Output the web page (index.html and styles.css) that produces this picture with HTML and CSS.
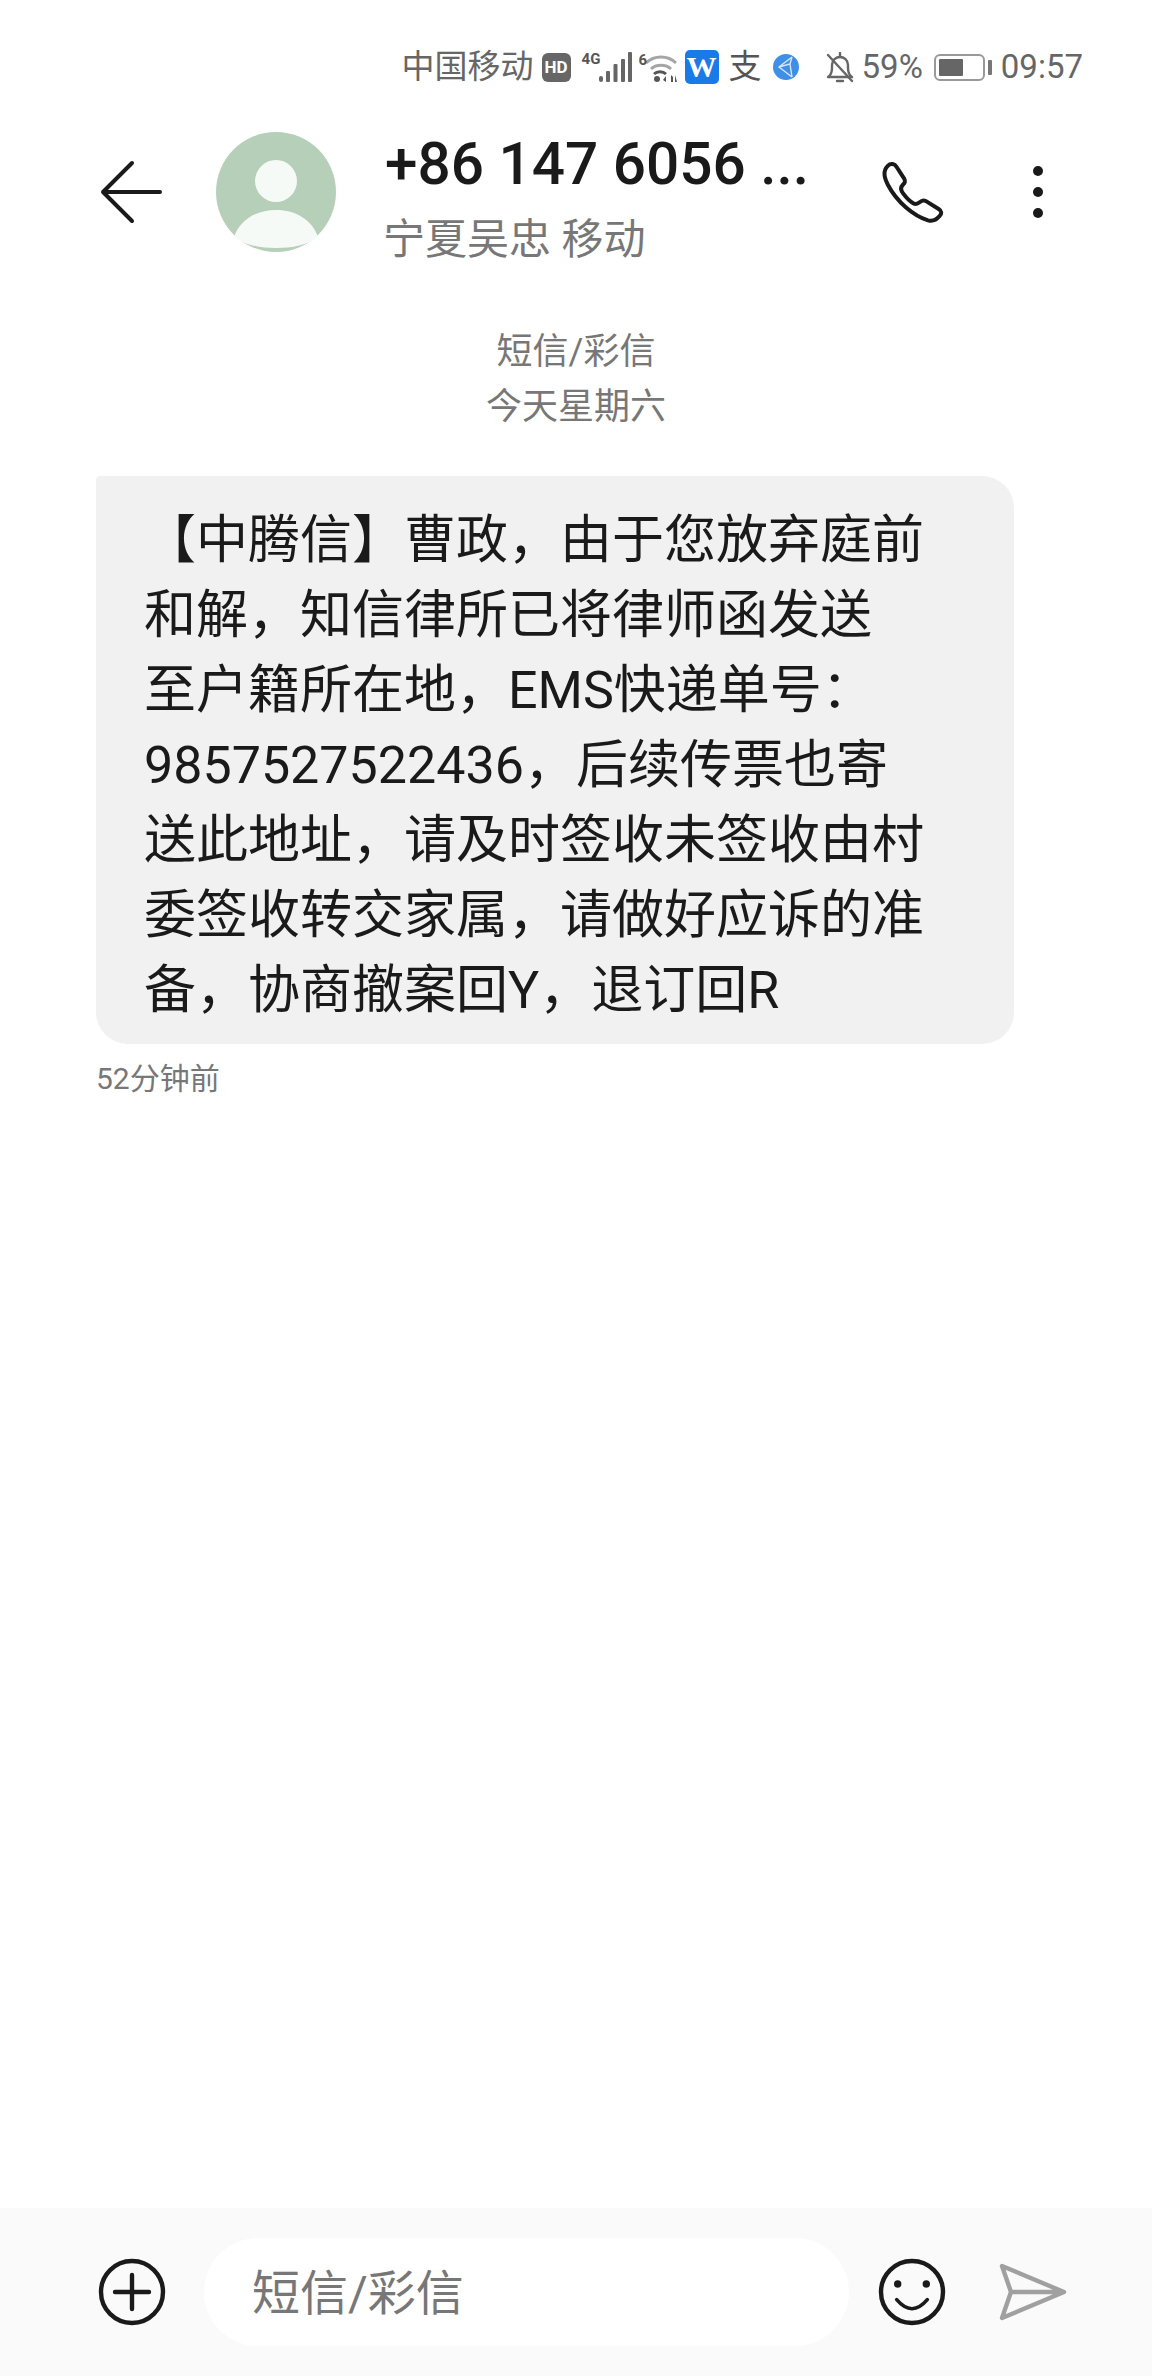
FILE: index.html
```html
<!DOCTYPE html>
<html lang="zh-CN">
<head>
    <meta charset="UTF-8">
    <meta name="viewport" content="width=device-width, initial-scale=1.0">
    <title>短信/彩信</title>
    <link rel="stylesheet" href="styles.css">
</head>
<body>
    <div class="phone">
        <div class="status-bar">
            <span class="carrier">中国移动</span>
            <span class="hd-badge">HD</span>
            <div class="signal">
                <span class="net-label">4G</span>
                <svg width="33" height="30" viewBox="0 0 33 30">
                    <g fill="#666">
                        <rect x="0" y="24" width="4" height="6" rx="2"/>
                        <rect x="7" y="19" width="4" height="11" rx="1"/>
                        <rect x="14.5" y="12" width="4" height="18" rx="1"/>
                        <rect x="22" y="7" width="4" height="23" rx="1"/>
                        <rect x="29" y="0" width="4" height="30" rx="1"/>
                    </g>
                </svg>
            </div>
            <div class="wifi">
                <span class="net-label">6</span>
                <svg width="32" height="28" viewBox="0 0 32 28">
                    <g fill="none" stroke="#a5a5a5" stroke-width="2.8">
                        <path d="M1 9C9 1 23 1 31 9"/>
                        <path d="M6 15C11 10 21 10 26 15"/>
                    </g>
                    <path d="M9 20C12 17 18 17 21 20" fill="none" stroke="#555" stroke-width="2.8"/>
                    <circle cx="12" cy="25" r="3" fill="#555"/>
                    <path d="M21 28v-6l-3 4zM26 21v7h2v-5zM30 21v7h2z" fill="#555"/>
                </svg>
            </div>
            <span class="app-badge">W</span>
            <span class="pay-icon">支</span>
            <svg class="globe" width="26" height="26" viewBox="0 0 26 26">
                <circle cx="13" cy="13" r="13" fill="#3f8fe6"/>
                <path d="M19 3 6 13l13 10M6 13l11-3 2-7M17 10l2 13" fill="none" stroke="#d6e6fa" stroke-width="1.4"/>
            </svg>
            <svg class="bell" width="28" height="31" viewBox="0 0 28 31">
                <path d="M2 25c3-2 4-5 4-9v-3c0-5 4-8 8-8s8 3 8 8v3c0 4 1 7 4 9z" fill="none" stroke="#666" stroke-width="2.4" stroke-linejoin="round"/>
                <path d="M14 1v4M11 29h6" stroke="#666" stroke-width="2.4" stroke-linecap="round"/>
                <path d="M2 3 26 29" stroke="#666" stroke-width="2.4" stroke-linecap="round"/>
            </svg>
            <span class="status-text percent">59%</span>
            <div class="battery">
                <div class="battery-shell"><div class="battery-level"></div></div>
                <div class="battery-tip"></div>
            </div>
            <span class="status-text">09:57</span>
        </div>

        <div class="top-bar">
            <svg class="back" width="64" height="64" viewBox="0 0 64 64">
                <path d="M32 3 3 32l29 29M3 32h57" fill="none" stroke="#1a1a1a" stroke-width="4" stroke-linecap="round" stroke-linejoin="round"/>
            </svg>
            <svg class="avatar" width="120" height="120" viewBox="0 0 120 120">
                <circle cx="60" cy="60" r="60" fill="#b6cfb9"/>
                <circle cx="60" cy="49" r="21" fill="#f6faf6"/>
                <path d="M18 105C24 88 40 78 60 78s36 10 42 27C92 113 76 116 60 116s-32-3-42-11z" fill="#f6faf6"/>
            </svg>
            <div class="contact">
                <div class="contact-number">+86 147 6056 ...</div>
                <div class="contact-place">宁夏吴忠 移动</div>
            </div>
            <svg class="call" width="65" height="65" viewBox="60 55 195 195">
                <path d="M84 72C92 64 104 66 110 76L132 110C138 120 134 124 128 130C120 138 122 146 130 156C140 170 150 180 162 186C172 190 178 180 188 177C194 175 198 178 204 182L236 202C246 208 246 216 238 224C228 236 218 240 204 236C160 222 110 180 84 130C72 106 68 88 84 72Z" fill="none" stroke="#1a1a1a" stroke-width="12" stroke-linejoin="round"/>
            </svg>
            <div class="more"><i></i><i></i><i></i></div>
        </div>

        <div class="thread-head">
            <div>短信/彩信</div>
            <div>今天星期六</div>
        </div>

        <div class="thread">
            <div class="bubble">【中腾信】曹政，由于您放弃庭前<br>和解，知信律所已将律师函发送<br>至户籍所在地，EMS快递单号：<br>9857527522436，后续传票也寄<br>送此地址，请及时签收未签收由村<br>委签收转交家属，请做好应诉的准<br>备，协商撤案回Y，退订回R</div>
            <div class="msg-time">52分钟前</div>
        </div>

        <div class="composer">
            <svg width="68" height="68" viewBox="0 0 68 68">
                <circle cx="34" cy="34" r="31" fill="none" stroke="#1a1a1a" stroke-width="4.4"/>
                <path d="M34 17v34M17 34h34" stroke="#1a1a1a" stroke-width="4.4" stroke-linecap="round"/>
            </svg>
            <div class="composer-input">短信/彩信</div>
            <svg width="68" height="68" viewBox="0 0 68 68">
                <circle cx="34" cy="34" r="31" fill="none" stroke="#1a1a1a" stroke-width="4.4"/>
                <circle cx="19.7" cy="26" r="3.7" fill="#1a1a1a"/>
                <circle cx="48.3" cy="26" r="3.7" fill="#1a1a1a"/>
                <path d="M18.7 41.7Q34 59.7 49.3 41.7" fill="none" stroke="#1a1a1a" stroke-width="3.6" stroke-linecap="round"/>
            </svg>
            <svg class="send" width="68" height="60" viewBox="0 0 68 60">
                <path d="M3 4 65 30 3 56l9-26zM12 30h53" fill="none" stroke="#a0a0a0" stroke-width="4.4" stroke-linejoin="round"/>
            </svg>
        </div>
    </div>
</body>
</html>
```

FILE: styles.css
```css
* {
    box-sizing: border-box;
}

body {
    margin: 0;
    background: #fff;
    font-family: Roboto, "Noto Sans CJK SC", sans-serif;
    color: #1a1a1a;
}

.phone {
    width: 1152px;
    height: 2376px;
    display: flex;
    flex-direction: column;
    overflow: hidden;
}

/* status bar */
.status-bar {
    height: 90px;
    padding: 44px 69px 0 0;
    display: flex;
    justify-content: flex-end;
    align-items: center;
    color: #666;
}

.carrier {
    font-size: 33px;
    line-height: 46px;
}

.hd-badge {
    width: 29px;
    height: 29px;
    margin-left: 8px;
    background: #666;
    border-radius: 6px;
    color: #fff;
    font-size: 17px;
    font-weight: 700;
    line-height: 29px;
    text-align: center;
}

.signal,
.wifi {
    position: relative;
    display: flex;
}

.signal {
    padding-left: 17px;
    margin-left: 11px;
}

.wifi {
    padding: 1px 0 0 6px;
    margin-left: 7px;
}

.net-label {
    position: absolute;
    left: 0;
    top: -1px;
    font-size: 15px;
    font-weight: 700;
    color: #555;
    line-height: 16px;
}

.app-badge {
    width: 34px;
    height: 34px;
    margin-left: 8px;
    background: #1a7ae8;
    border-radius: 5px;
    color: #fff;
    font-family: "Liberation Serif", serif;
    font-size: 30px;
    font-weight: 700;
    line-height: 34px;
    text-align: center;
}

.pay-icon {
    width: 32px;
    margin-left: 10px;
    font-size: 33px;
    line-height: 36px;
    color: #555;
}

.globe {
    margin-left: 12px;
}

.bell {
    margin-left: 27px;
}

.status-text {
    font-size: 33px;
    line-height: 46px;
}

.percent {
    margin-left: 8px;
}

.battery {
    display: flex;
    align-items: center;
    margin: 0 9px 0 11px;
}

.battery-shell {
    width: 51px;
    height: 27px;
    padding: 3px;
    border: 2px solid #999;
    border-radius: 6px;
}

.battery-level {
    width: 60%;
    height: 100%;
    background: #666;
    border-radius: 1px;
}

.battery-tip {
    width: 4px;
    height: 15px;
    margin-left: 3px;
    background: #777;
    border-radius: 1px;
}

/* contact header */
.top-bar {
    height: 124px;
    margin-top: 40px;
    padding-left: 100px;
    display: flex;
    align-items: center;
}

.back {
    margin-right: 52px;
}

.avatar {
    margin-right: 49px;
}

.contact {
    width: 495px;
    margin-top: 17px;
}

.contact-number {
    font-size: 58.5px;
    font-weight: 500;
    line-height: 79px;
    white-space: nowrap;
}

.contact-place {
    margin-left: -2px;
    font-size: 42px;
    line-height: 72px;
    color: #777;
}

.call {
    margin-right: 88px;
}

.more {
    display: flex;
    flex-direction: column;
    gap: 11px;
}

.more i {
    display: block;
    width: 10px;
    height: 10px;
    border-radius: 50%;
    background: #1a1a1a;
}

/* thread */
.thread-head {
    margin-top: 71px;
    font-size: 36px;
    line-height: 55px;
    text-align: center;
    color: #777;
}

.thread {
    flex: 1;
    padding: 41px 0 0 96px;
}

.bubble {
    width: 918px;
    height: 568px;
    padding: 27px 0 0 48px;
    background: #f1f1f1;
    border-radius: 4px 32px 32px 32px;
    font-size: 52px;
    line-height: 75px;
    white-space: nowrap;
}

.msg-time {
    margin-top: 15px;
    font-size: 30px;
    line-height: 40px;
    color: #777;
}

/* bottom input row */
.composer {
    height: 168px;
    padding-left: 98px;
    display: flex;
    align-items: center;
    background: #fafafa;
}

.composer-input {
    width: 645px;
    height: 108px;
    margin: 0 29px 0 38px;
    padding-left: 48px;
    border-radius: 54px;
    background: #fff;
    font-size: 48px;
    line-height: 112px;
    color: #777;
}

.send {
    margin-left: 53px;
}
```
